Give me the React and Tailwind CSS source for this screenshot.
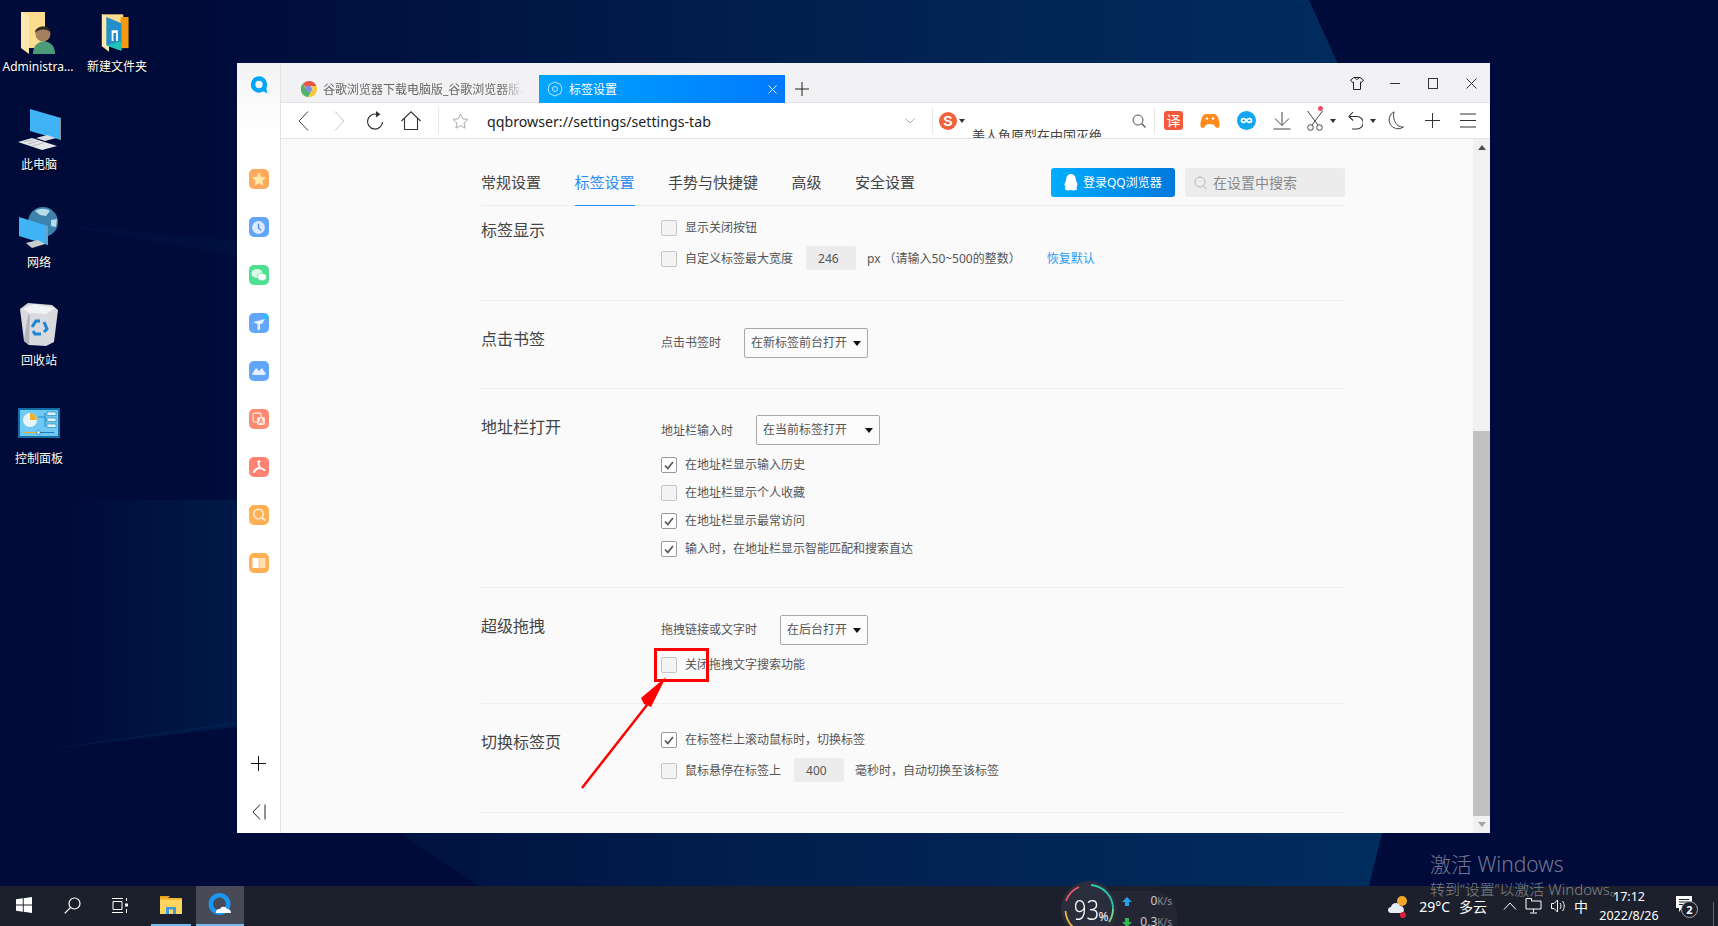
import React from 'react';

const cjk = "[font-family:'Noto_Sans','Noto_Sans_CJK_SC',sans-serif]";

function Wallpaper() {
  return (
    <svg className="absolute inset-0 w-full h-full" viewBox="0 0 1718 926">
      <defs>
        <linearGradient id="beam" x1="200" y1="0" x2="1340" y2="0" gradientUnits="userSpaceOnUse">
          <stop offset="0" stopColor="#000b3a" />
          <stop offset="0.5" stopColor="#011f4d" />
          <stop offset="1" stopColor="#012c5e" />
        </linearGradient>
        <linearGradient id="side" x1="70" y1="0" x2="237" y2="0" gradientUnits="userSpaceOnUse">
          <stop offset="0" stopColor="#000b3a" />
          <stop offset="1" stopColor="#001a47" />
        </linearGradient>
      </defs>
      <polygon points="200,0 1309,0 1490,400 1369,886 480,886 237,725 200,400" fill="url(#beam)" />
      <polygon points="60,500 237,500 237,724 40,750" fill="url(#side)" />
      <polygon points="40,750 237,722 237,727" fill="#01305f" opacity="0.35" />
      <polygon points="60,225 237,240 237,256" fill="#012a55" opacity="0.15" />
    </svg>
  );
}

function DesktopIcon({ pos, gap, label, children }) {
  return (
    <div className={`absolute flex flex-col items-center ${pos}`}>
      {children}
      <span className={`${gap} text-[12px] leading-[18px] text-white [text-shadow:0_1px_2px_#000] ${cjk}`}>{label}</span>
    </div>
  );
}

function FolderBack({ children, w = 36 }) {
  return (
    <svg width={w} height="42" viewBox="0 0 36 42">
      <path d="M1 0 H25 V36 H1 Z" fill="#fcdc8e" />
      <path d="M1 0 L9 4 V42 L1 36 Z" fill="#fbe8ad" />
      {children}
    </svg>
  );
}

function DesktopIcons() {
  return (
    <>
      <DesktopIcon pos="left-0 top-[12px] w-[76px]" gap="mt-[4px]" label="Administra...">
        <FolderBack>
          <path d="M13 42 C13 32 19 30 24 29 C29 30 35 32 35 42 Z" fill="#4b9a78" />
          <circle cx="23" cy="22" r="7.5" fill="#a4805f" />
          <path d="M15 21 C15 13 30 12 31 21 C28 17 20 16 15 21 Z" fill="#2e2a26" />
        </FolderBack>
      </DesktopIcon>
      <DesktopIcon pos="left-[79px] top-[12px] w-[76px]" gap="mt-[4px]" label="新建文件夹">
        <FolderBack w={32}>
          <path d="M22 3 H31 V38 H22 Z" fill="#f79a12" />
          <path d="M6 3 L23 10 V41 L6 35 Z" fill="#2390c9" />
          <path d="M12 18 H19 V30 H17 V21 H14 V30 H12 Z" fill="#fff" />
          <path d="M6 35 L23 41 V30 Z" fill="#22c5b5" />
        </FolderBack>
      </DesktopIcon>
      <DesktopIcon pos="left-0 top-[109px] w-[78px]" gap="mt-[6px]" label="此电脑">
        <svg width="43" height="41" viewBox="0 0 43 41">
          <path d="M12 0 L43 9 V31 L12 22 Z" fill="#3fb3f5" />
          <path d="M41.5 9 H43 V31 L41.5 30.5 Z" fill="#8b95a0" />
          <path d="M18 29 L29 26 L38 29 L27 32 Z" fill="#d9dde0" />
          <path d="M0 33 L14 29 L39 37 L24 41 Z" fill="#e4e6e8" />
          <path d="M6 33 L15 31 M10 35 L20 32 M14 37 L25 34" stroke="#b4b8bc" strokeWidth="1" />
        </svg>
      </DesktopIcon>
      <DesktopIcon pos="left-0 top-[207px] w-[78px]" gap="mt-[6px]" label="网络">
        <svg width="40" height="41" viewBox="0 0 40 41">
          <circle cx="24" cy="15" r="15" fill="#3d83ab" />
          <path d="M16 4 C21 1 27 1 31 4 L27 9 L21 8 Z M32 13 L38 12 L37 20 L32 19 Z" fill="#b8dbe8" />
          <path d="M0 10 L29 19 V38 L0 29 Z" fill="#3fb3f5" />
          <path d="M27.5 18.5 L29 19 V38 L27.5 37.5 Z" fill="#8b95a0" />
          <path d="M7 36 L19 33 L26 37 L13 41 Z" fill="#c9cdd0" />
        </svg>
      </DesktopIcon>
      <DesktopIcon pos="left-0 top-[303px] w-[78px]" gap="mt-[6px]" label="回收站">
        <svg width="38" height="43" viewBox="0 0 38 43">
          <path d="M0 6 L8 0 L32 2 L38 7 L34 39 L26 43 L9 42 L4 38 Z" fill="#d8dadd" />
          <path d="M3 6 L14 1 L24 3 L35 5 L26 11 L10 10 Z" fill="#f1f2f3" />
          <path d="M8 12 L4 38 L9 42 L10 12 Z" fill="#b3b6ba" />
          <g fill="none" stroke="#1a86d8" strokeWidth="3">
            <path d="M12 24 L16 18 H20" />
            <path d="M24 19 L27 26 L24 29" />
            <path d="M21 31 H15 L13 28" />
          </g>
        </svg>
      </DesktopIcon>
      <DesktopIcon pos="left-0 top-[408px] w-[78px]" gap="mt-[12px]" label="控制面板">
        <svg width="42" height="30" viewBox="0 0 42 30">
          <rect width="42" height="30" fill="#136ea6" />
          <rect x="2" y="2" width="38" height="26" fill="#6fc9f3" />
          <circle cx="12" cy="12" r="7" fill="#e8f4fb" />
          <path d="M12 12 V5 A7 7 0 0 1 19 12 Z" fill="#f0b02b" />
          <path d="M20 9 H27 M27 5 V19 M27 12 H29" stroke="#1b7cb4" strokeWidth="0.8" />
          <rect x="29" y="4" width="9" height="3.5" fill="#dff2fb" stroke="#1b7cb4" strokeWidth="0.6" />
          <rect x="29" y="10" width="9" height="3.5" fill="#dff2fb" stroke="#1b7cb4" strokeWidth="0.6" />
          <rect x="29" y="16" width="9" height="3.5" fill="#dff2fb" stroke="#1b7cb4" strokeWidth="0.6" />
          <path d="M6 24.500 H36" stroke="#1b7cb4" strokeWidth="1" />
          <path d="M6 24.500 H19" stroke="#f0b02b" strokeWidth="1" />
          <rect x="19" y="23" width="3" height="3" fill="#fff" stroke="#1b7cb4" strokeWidth="0.6" />
        </svg>
      </DesktopIcon>
    </>
  );
}

function QLogo({ size = 18 }) {
  return (
    <svg width={size} height={size} viewBox="0 0 16 16">
      <circle cx="8" cy="7.500" r="5.300" fill="none" stroke="#00a5f8" strokeWidth="4" />
      <path d="M9 12 L15.500 15.500 L14 9 Z" fill="#00a5f8" />
    </svg>
  );
}

function RailTile({ bg, children }) {
  return <div className={`w-[20px] h-[20px] rounded-[5px] flex items-center justify-center overflow-hidden ${bg}`}>{children}</div>;
}

function Rail() {
  return (
    <div className="w-[44px] shrink-0 h-full flex flex-col items-center border-r border-[#e2e2e2] bg-gradient-to-b from-[#f3f3f5] to-white to-[9%]">
      <div className="mt-[13px] mb-[75px] h-[18px]">
        <QLogo />
      </div>
      <div className="flex flex-col gap-[28px]">
        <RailTile bg="bg-[#ffa95c]">
          <svg width="16" height="16" viewBox="0 0 14 14"><path d="M7 1 L8.800 5 L13 5.500 L10 8.500 L10.800 13 L7 10.800 L3.200 13 L4 8.500 L1 5.500 L5.200 5 Z" fill="#ffe9a8" /></svg>
        </RailTile>
        <RailTile bg="bg-[#62a6fb]">
          <svg width="15" height="15" viewBox="0 0 14 14"><circle cx="7" cy="7" r="6" fill="#dceaff" /><path d="M7 3.500 V7.500 L9.500 9.500" fill="none" stroke="#4a8ff0" strokeWidth="1.300" /></svg>
        </RailTile>
        <RailTile bg="bg-[#4fdf90]">
          <svg width="16" height="14" viewBox="0 0 16 14"><ellipse cx="6" cy="5.500" rx="5.500" ry="4.500" fill="#d8fbe6" /><ellipse cx="11" cy="9" rx="4.500" ry="3.800" fill="#fff" stroke="#4fdf90" strokeWidth="0.7" /></svg>
        </RailTile>
        <RailTile bg="bg-[#62a6fb] relative">
          <svg width="16" height="16" viewBox="0 0 16 16"><path d="M2 7 L14 4 L11 9 H9 V15 H6.500 V9 Z" fill="#e4efff" /></svg>
          <span className="absolute right-[1px] top-[1px] w-[5px] h-[5px] rounded-full bg-[#19c3ff]" />
        </RailTile>
        <RailTile bg="bg-[#62a6fb]">
          <svg width="16" height="12" viewBox="0 0 16 12"><path d="M1 9 L5 3 L8 6 L11 3 L15 9 L13 10 H3 Z" fill="#e4efff" /></svg>
        </RailTile>
        <RailTile bg="bg-[#ff8a70]">
          <svg width="16" height="16" viewBox="0 0 16 16"><rect x="2" y="2" width="8" height="9" rx="2" fill="none" stroke="#ffdcd3" strokeWidth="1.300" /><rect x="6" y="6" width="8" height="8" rx="2" fill="#ffe9e3" /><path d="M8 12.500 L10 7.500 L12 12.500 M8.800 11 H11.200" fill="none" stroke="#ff7a5e" strokeWidth="0.900" /></svg>
        </RailTile>
        <RailTile bg="bg-[#ff8272]">
          <svg width="14" height="14" viewBox="0 0 14 14"><path d="M7 1.500 C5.500 3 7 6 8 8 C9.500 8.500 11.500 8.800 12.500 10 M8 8 C6 8 3.500 9.500 2 12 M6.500 1.500 H7.500" fill="none" stroke="#fff" strokeWidth="1.900" strokeLinecap="round" /></svg>
        </RailTile>
        <RailTile bg="bg-[#ffb054]">
          <svg width="16" height="16" viewBox="0 0 16 16"><circle cx="7.500" cy="7" r="4.700" fill="none" stroke="#ffedd2" strokeWidth="1.600" /><path d="M11 10.500 L14 13.500" stroke="#ffedd2" strokeWidth="1.800" /></svg>
        </RailTile>
        <RailTile bg="bg-[#ffb054]">
          <svg width="14" height="12" viewBox="0 0 14 12"><path d="M0.500 1 H6.700 V11 H0.500 Z" fill="#fff" /><path d="M7.300 1 H13.500 V11 H7.300 Z" fill="#ffe0b5" /></svg>
        </RailTile>
      </div>
      <div className="mt-auto mb-[13px] flex flex-col items-center gap-[33px]">
        <svg width="15" height="15" viewBox="0 0 15 15"><path d="M7.500 0 V15 M0 7.500 H15" stroke="#111" strokeWidth="1" /></svg>
        <svg width="14" height="16" viewBox="0 0 14 16"><path d="M8 0.500 L1 8 L8 15.500 M13 0.500 V15.500" fill="none" stroke="#222" strokeWidth="1" /></svg>
      </div>
    </div>
  );
}

function WinButton({ children }) {
  return <div className="w-[38px] h-[40px] flex items-center justify-center">{children}</div>;
}

function TabStrip() {
  return (
    <div className={`h-[40px] shrink-0 flex bg-[#f2f2f5] border-b border-[#e4e4e7] ${cjk}`}>
      <div className="flex items-center h-full pt-[13px] pl-[20px]">
        <svg width="16" height="16" viewBox="0 0 16 16">
          <path d="M8 0 A8 8 0 0 1 15.400 5 H8 A3 3 0 0 0 5.200 7 L2 2.500 A8 8 0 0 1 8 0 Z" fill="#e7564b" />
          <path d="M15.400 5 A8 8 0 0 1 7 16 L10.500 9.700 A3 3 0 0 0 10.300 5 Z" fill="#f6c73c" />
          <path d="M2 2.500 L6 9.500 A3 3 0 0 0 10.500 9.700 L7 16 A8 8 0 0 1 2 2.500 Z" fill="#4fb267" />
          <circle cx="8" cy="8" r="3" fill="#7a8ee8" />
        </svg>
        <span className="ml-[6px] pt-[2px] w-[201px] overflow-hidden whitespace-nowrap text-[12px] text-[#666] [mask-image:linear-gradient(90deg,#000_88%,transparent)]">谷歌浏览器下载电脑版_谷歌浏览器版本</span>
      </div>
      <div className="ml-[15px] mt-[12px] w-[246px] h-[28px] flex items-center pl-[8px] pr-[8px] bg-gradient-to-r from-[#00a6ff] to-[#0079ff] text-white">
        <svg width="16" height="16" viewBox="0 0 16 16"><path d="M8 1 L13.500 3.500 L15 8 L13.500 12.500 L8 15 L2.500 12.500 L1 8 L2.500 3.500 Z" fill="none" stroke="#bfe6ff" strokeWidth="1" /><circle cx="8" cy="8" r="2.500" fill="none" stroke="#bfe6ff" strokeWidth="1" /></svg>
        <span className="ml-[6px] pt-[2px] text-[12px]">标签设置</span>
        <svg className="ml-auto" width="9" height="9" viewBox="0 0 9 9"><path d="M0.500 0.500 L8.500 8.500 M8.500 0.500 L0.500 8.500" stroke="#fff" strokeWidth="1" /></svg>
      </div>
      <div className="ml-[10px] mt-[19px]">
        <svg width="14" height="14" viewBox="0 0 14 14"><path d="M7 0 V14 M0 7 H14" stroke="#222" strokeWidth="1" /></svg>
      </div>
      <div className="ml-auto flex">
        <WinButton>
          <svg width="14" height="13" viewBox="0 0 14 13"><path d="M4 0.500 H10 L13.500 3 L11.500 5.500 L10.500 5 V12.500 H3.500 V5 L2.500 5.500 L0.500 3 Z M5 0.500 C5.500 3 8.500 3 9 0.500" fill="none" stroke="#222" strokeWidth="1" /></svg>
        </WinButton>
        <WinButton><div className="w-[10px] h-px bg-[#333]" /></WinButton>
        <WinButton><div className="w-[10px] h-[11px] border border-[#333]" /></WinButton>
        <WinButton>
          <svg width="11" height="11" viewBox="0 0 11 11"><path d="M0.500 0.500 L10.500 10.500 M10.500 0.500 L0.500 10.500" stroke="#333" strokeWidth="1" /></svg>
        </WinButton>
      </div>
    </div>
  );
}

function ToolBtn({ w = 'w-[36px]', children }) {
  return <div className={`${w} h-full shrink-0 flex items-center justify-center`}>{children}</div>;
}

function Caret() {
  return <svg className="shrink-0" width="6" height="4" viewBox="0 0 6 4"><path d="M0 0 H6 L3 4 Z" fill="#333" /></svg>;
}

function ToolBar() {
  return (
    <div className={`h-[36px] shrink-0 flex items-center pl-[4px] bg-white border-b border-[#e4e4e7] ${cjk}`}>
      <ToolBtn>
        <svg width="11" height="20" viewBox="0 0 11 20"><path d="M10 0.500 L1 10 L10 19.500" fill="none" stroke="#444" strokeWidth="1" /></svg>
      </ToolBtn>
      <ToolBtn>
        <svg width="11" height="20" viewBox="0 0 11 20"><path d="M1 0.500 L10 10 L1 19.500" fill="none" stroke="#c4c4c4" strokeWidth="1" /></svg>
      </ToolBtn>
      <ToolBtn>
        <svg width="18" height="20" viewBox="0 0 18 20"><path d="M11 3.300 A7.500 7.500 0 1 0 16.500 11" fill="none" stroke="#333" strokeWidth="1.200" /><path d="M10 0 L14.500 3.300 L10 6.500 Z" fill="#333" /></svg>
      </ToolBtn>
      <ToolBtn>
        <svg width="20" height="19" viewBox="0 0 20 19"><path d="M0.500 10 L10 0.800 L19.500 10 M3.500 7.500 V18.500 H16.500 V7.500" fill="none" stroke="#333" strokeWidth="1.100" /></svg>
      </ToolBtn>
      <div className="ml-[9px] w-px h-[26px] bg-[#e8e8e8]" />
      <div className="ml-[6px] w-[30px] flex justify-center">
        <svg width="17" height="16" viewBox="0 0 17 16"><path d="M8.500 1 L10.700 5.800 L16 6.400 L12 10 L13.100 15.200 L8.500 12.600 L3.900 15.200 L5 10 L1 6.400 L6.300 5.800 Z" fill="none" stroke="#aaa" strokeWidth="1" /></svg>
      </div>
      <span className="ml-[12px] pt-[2px] w-[413px] text-[14.200px] text-[#222] whitespace-nowrap">qqbrowser://settings/settings-tab</span>
      <div className="w-[20px] flex justify-center">
        <svg width="10" height="6" viewBox="0 0 10 6"><path d="M0.500 0.500 L5 5 L9.500 0.500" fill="none" stroke="#aaa" strokeWidth="1" /></svg>
      </div>
      <div className="ml-[12px] w-px h-[26px] bg-[#e8e8e8]" />
      <div className="ml-[6px] w-[18px] h-[18px] rounded-full bg-[#f2613c] flex items-center justify-center text-[14px] leading-none font-bold text-white [font-family:'Liberation_Sans',sans-serif]">S</div>
      <div className="ml-[1px] w-[7px] flex justify-center"><Caret /></div>
      <div className="ml-[7px] w-[130px] h-full overflow-hidden pt-[24px] text-[13px] leading-[16px] text-[#444] whitespace-nowrap">美人鱼原型在中国灭绝</div>
      <div className="ml-[27px] w-[20px] flex justify-center">
        <svg width="14" height="14" viewBox="0 0 14 14"><circle cx="6" cy="6" r="5" fill="none" stroke="#555" strokeWidth="1" /><path d="M9.500 9.500 L13.500 13.500" stroke="#555" strokeWidth="1.200" /></svg>
      </div>
      <div className="ml-[5px] w-px h-[26px] bg-[#e8e8e8]" />
      <div className="ml-[9px] w-[19px] h-[19px] rounded-[3px] bg-[#f4593c] flex items-center justify-center text-[14px] leading-none text-white">译</div>
      <div className="ml-[9px] flex h-full">
        <ToolBtn>
          <svg width="20" height="16" viewBox="0 0 20 16"><path d="M6 1 H14 C18 1 20 9 19.500 13 C19 16 16 15.500 14 12 C13 10.500 7 10.500 6 12 C4 15.500 1 16 0.500 13 C0 9 2 1 6 1 Z" fill="#ff8a1e" /><circle cx="7" cy="5.500" r="1.200" fill="#fff" /><circle cx="13" cy="5.500" r="1.200" fill="#fff" /></svg>
        </ToolBtn>
        <ToolBtn>
          <svg width="19" height="19" viewBox="0 0 19 19"><circle cx="9.500" cy="9.500" r="9.500" fill="#14a6f0" /><path d="M9.500 9.500 C8 7 4.500 7 4.500 9.500 C4.500 12 8 12 9.500 9.500 C11 7 14.500 7 14.500 9.500 C14.500 12 11 12 9.500 9.500 Z" fill="none" stroke="#fff" strokeWidth="1.600" /></svg>
        </ToolBtn>
        <ToolBtn>
          <svg width="18" height="18" viewBox="0 0 18 18"><path d="M9 0 V13 M2 6.500 L9 13.500 L16 6.500 M0.500 17 H17.500" fill="none" stroke="#444" strokeWidth="1" /></svg>
        </ToolBtn>
        <ToolBtn w="w-[30px] relative">
          <svg width="18" height="21" viewBox="0 0 18 21"><path d="M1.500 1 L12 15 M16.500 1 L6 15" stroke="#444" strokeWidth="1" /><circle cx="4.500" cy="17.500" r="2.800" fill="none" stroke="#444" strokeWidth="1" /><circle cx="13.500" cy="17.500" r="2.800" fill="none" stroke="#444" strokeWidth="1" /></svg>
          <span className="absolute right-[7px] top-[3px] w-[5px] h-[5px] rounded-full bg-[#ee4d5f]" />
        </ToolBtn>
        <div className="w-[6px] h-full flex items-center"><Caret /></div>
        <div className="w-[4px]" />
        <ToolBtn w="w-[30px]">
          <svg width="15" height="19" viewBox="0 0 15 19"><path d="M1 5.500 H9 A6 6 0 0 1 9 18 H4" fill="none" stroke="#333" strokeWidth="1.100" /><path d="M5 1 L1 5.500 L5 9.500" fill="none" stroke="#333" strokeWidth="1.100" /></svg>
        </ToolBtn>
        <div className="w-[6px] h-full flex items-center"><Caret /></div>
        <div className="w-[2px]" />
        <ToolBtn>
          <svg width="16" height="19" viewBox="0 0 16 19"><path d="M6 0.800 A9 9 0 1 0 15.500 16 C9 17 4 9 6 0.800 Z" fill="none" stroke="#444" strokeWidth="1" /></svg>
        </ToolBtn>
        <ToolBtn>
          <svg width="15" height="15" viewBox="0 0 15 15"><path d="M7.500 0 V15 M0 7.500 H15" stroke="#333" strokeWidth="1" /></svg>
        </ToolBtn>
        <ToolBtn>
          <svg width="16" height="15" viewBox="0 0 16 15"><path d="M0 1 H16 M0 7.500 H16 M0 14 H16" stroke="#333" strokeWidth="1" /></svg>
        </ToolBtn>
      </div>
    </div>
  );
}

function Check({ on }) {
  return (
    <div className={`w-[16px] h-[16px] shrink-0 rounded-[2px] border flex items-center justify-center ${on ? 'bg-white border-[#999]' : 'bg-[#f4f4f4] border-[#c4c4c4]'}`}>
      {on && <svg width="10" height="9" viewBox="0 0 10 9"><path d="M1 4.500 L3.800 7.500 L9 1" fill="none" stroke="#555" strokeWidth="1.700" /></svg>}
    </div>
  );
}

function Option({ on, children }) {
  return (
    <div className="flex items-center h-[16px] gap-[8px] text-[12px] text-[#555]">
      <Check on={on} />
      <span className="whitespace-nowrap">{children}</span>
    </div>
  );
}

function Dropdown({ w, text }) {
  return (
    <div className={`${w} h-[30px] flex items-center justify-between pl-[6px] pr-[6px] rounded-[2px] border border-[#a8a8a8] bg-[#fbfbfb] text-[12px] text-[#555]`}>
      <span className="whitespace-nowrap">{text}</span>
      <svg width="8" height="5" viewBox="0 0 8 5"><path d="M0 0 H8 L4 5 Z" fill="#111" /></svg>
    </div>
  );
}

function NumBox({ value }) {
  return <input readOnly value={value} className="block mb-[2px] w-[50px] h-[24px] pl-[12px] rounded-[3px] bg-[#ececec] text-[12px] text-[#555] outline-none" />;
}

function Section({ h, top, labelOffset, title, children }) {
  return (
    <div className={`${h} ${top} flex border-b border-[#eeeeee]`}>
      <div className={`w-[180px] shrink-0 text-[16px] leading-[24px] text-[#444] ${labelOffset}`}>{title}</div>
      <div className="flex flex-col items-start">{children}</div>
    </div>
  );
}

function SettingsTabs() {
  const names = ['常规设置', '标签设置', '手势与快捷键', '高级', '安全设置'];
  return (
    <div className="h-[67px] flex items-stretch gap-[33.500px] border-b border-[#eeeeee]">
      {names.map((n) => (
        <div key={n} className={`pt-[32px] -mb-px text-[15px] leading-[22px] border-b ${n === '标签设置' ? 'text-[#2a8cf0] border-[#2a8cf0]' : 'text-[#444] border-transparent'}`}>{n}</div>
      ))}
      <div className="ml-auto mt-[29px] w-[124px] h-[29px] flex items-center pl-[13px] gap-[5px] rounded-[3px] bg-gradient-to-r from-[#00aeff] to-[#0078dc] text-[12px] text-white">
        <svg width="14" height="17" viewBox="0 0 14 17"><path d="M7 0 C11 0 12 4 12 6.500 C13.500 9 14 12 12.500 12.500 C12.500 14 14 15 12 16 C10 17 8.500 16 7 16 C5.500 16 4 17 2 16 C0 15 1.500 14 1.500 12.500 C0 12 0.500 9 2 6.500 C2 4 3 0 7 0 Z" fill="#fff" /></svg>
        <span className="whitespace-nowrap">登录QQ浏览器</span>
      </div>
      <div className="-ml-[23.500px] mt-[29px] w-[160px] h-[29px] flex items-center pl-[9px] gap-[6px] rounded-[3px] bg-[#ececec] text-[14px] text-[#888]">
        <svg width="13" height="14" viewBox="0 0 13 14"><circle cx="6" cy="6" r="5" fill="none" stroke="#b8b8b8" strokeWidth="1" /><path d="M9.500 10 L12.500 13.500" stroke="#b8b8b8" strokeWidth="1" /></svg>
        <span className="whitespace-nowrap">在设置中搜索</span>
      </div>
    </div>
  );
}

function SettingsPage() {
  return (
    <div className="flex-1 pl-[200px] pr-[128px] bg-[#fafafa]">
      <SettingsTabs />
      <Section h="h-[95px]" top="pt-[14px]" labelOffset="-mt-[2px]" title="标签显示">
        <Option>显示关闭按钮</Option>
        <div className="mt-[11px] flex items-center h-[24px] text-[12px] text-[#555]">
          <Check />
          <span className="ml-[8px]">自定义标签最大宽度</span>
          <div className="ml-[13px]"><NumBox value="246" /></div>
          <span className="ml-[11px]">px</span>
          <span className="ml-[3px] whitespace-nowrap">（请输入50~500的整数）</span>
          <span className="ml-[26px] text-[#2a9bf5]">恢复默认</span>
        </div>
      </Section>
      <Section h="h-[88px]" top="pt-[27px]" labelOffset="-mt-px" title="点击书签">
        <div className="flex items-center gap-[23px] text-[12px] text-[#555]">
          <span>点击书签时</span>
          <Dropdown w="w-[124px]" text="在新标签前台打开" />
        </div>
      </Section>
      <Section h="h-[199px]" top="pt-[26px]" labelOffset="mt-0" title="地址栏打开">
        <div className="flex items-center gap-[23px] text-[12px] text-[#555]">
          <span className="pt-[2px]">地址栏输入时</span>
          <Dropdown w="w-[124px]" text="在当前标签打开" />
        </div>
        <div className="mt-[12px] flex flex-col gap-[12px]">
          <Option on>在地址栏显示输入历史</Option>
          <Option>在地址栏显示个人收藏</Option>
          <Option on>在地址栏显示最常访问</Option>
          <Option on>输入时，在地址栏显示智能匹配和搜索直达</Option>
        </div>
      </Section>
      <Section h="h-[116px]" top="pt-[27px]" labelOffset="-mt-px" title="超级拖拽">
        <div className="flex items-center gap-[23px] text-[12px] text-[#555]">
          <span>拖拽链接或文字时</span>
          <Dropdown w="w-[88px]" text="在后台打开" />
        </div>
        <div className="mt-[12px]">
          <Option>关闭拖拽文字搜索功能</Option>
        </div>
      </Section>
      <Section h="h-[109px]" top="pt-[28px]" labelOffset="-mt-[2px]" title="切换标签页">
        <Option on>在标签栏上滚动鼠标时，切换标签</Option>
        <div className="mt-[11px] flex items-center h-[24px] text-[12px] text-[#555]">
          <Check />
          <span className="ml-[8px]">鼠标悬停在标签上</span>
          <div className="ml-[13px]"><NumBox value="400" /></div>
          <span className="ml-[11px] whitespace-nowrap">毫秒时，自动切换至该标签</span>
        </div>
      </Section>
    </div>
  );
}

function Scrollbar() {
  return (
    <div className="w-[17px] shrink-0 flex flex-col bg-[#f1f1f1]">
      <div className="h-[17px] flex items-center justify-center">
        <svg width="8" height="5" viewBox="0 0 8 5"><path d="M4 0 L8 5 H0 Z" fill="#505050" /></svg>
      </div>
      <div className="flex-1">
        <div className="mt-[275px] h-[385px] bg-[#c1c1c1]" />
      </div>
      <div className="h-[17px] flex items-center justify-center">
        <svg width="8" height="5" viewBox="0 0 8 5"><path d="M4 5 L8 0 H0 Z" fill="#a3a3a3" /></svg>
      </div>
    </div>
  );
}

function BrowserWindow() {
  return (
    <div className={`absolute left-[237px] top-[63px] w-[1253px] h-[770px] flex bg-white ${cjk}`}>
      <Rail />
      <div className="flex-1 min-w-0 flex flex-col">
        <TabStrip />
        <ToolBar />
        <div className="flex-1 min-h-0 flex">
          <SettingsPage />
          <Scrollbar />
        </div>
      </div>
    </div>
  );
}

function Annotation() {
  return (
    <>
      <div className="absolute left-[654px] top-[648px] w-[55px] h-[34px] border-[3px] border-[#ff0000]" />
      <svg className="absolute left-[575px] top-[670px]" width="100" height="125" viewBox="0 0 100 125">
        <path d="M7 118 L72 35" stroke="#ff0000" strokeWidth="2.500" />
        <path d="M91 7 L66 28 L69 34 L76 37 Z" fill="#ff0000" />
      </svg>
    </>
  );
}

function TaskSlot({ w, active, line, children }) {
  return (
    <div className={`${w} h-full shrink-0 flex items-center justify-center border-b-[2px] ${line ? 'border-[#76b9ed]' : 'border-transparent'} ${active ? 'bg-[#484b57]' : ''}`}>
      {children}
    </div>
  );
}

function Taskbar() {
  return (
    <div className={`absolute left-0 right-0 top-[886px] h-[40px] flex items-center bg-[#1c202c] text-white ${cjk}`}>
      <TaskSlot w="w-[48px]">
        <svg width="16" height="16" viewBox="0 0 16 16"><path d="M0 2.300 L6.800 1.300 V7.500 H0 Z M7.700 1.200 L16 0 V7.500 H7.700 Z M0 8.500 H6.800 V14.700 L0 13.700 Z M7.700 8.500 H16 V16 L7.700 14.800 Z" fill="#fff" /></svg>
      </TaskSlot>
      <TaskSlot w="w-[48px]">
        <svg width="17" height="17" viewBox="0 0 17 17"><circle cx="10.500" cy="6.500" r="5.500" fill="none" stroke="#fff" strokeWidth="1.200" /><path d="M6.500 10.500 L0.700 16.300" stroke="#fff" strokeWidth="1.200" /></svg>
      </TaskSlot>
      <TaskSlot w="w-[48px]">
        <svg width="16" height="15" viewBox="0 0 16 15"><path d="M0 0.500 H11 M0 14.500 H11 M1 3.500 H10 V11.500 H1 Z M14.500 0 V3 M14.500 11 V15" fill="none" stroke="#fff" strokeWidth="1" /><rect x="13" y="5.500" width="3" height="3" fill="#fff" /></svg>
      </TaskSlot>
      <div className="w-[7px]" />
      <TaskSlot w="w-[40px]" line>
        <svg width="22" height="18" viewBox="0 0 22 18"><path d="M0 2 H8 L10 0 H0 Z" fill="#e8a21c" /><rect y="2" width="22" height="16" fill="#fdd55f" /><rect y="2" width="22" height="2" fill="#f3b92f" /><path d="M6 18 V11 H16 V18 H13 V13.500 H9 V18 Z" fill="#3f9ae0" /></svg>
      </TaskSlot>
      <div className="w-[5px]" />
      <TaskSlot w="w-[48px]" active line>
        <svg width="24" height="24" viewBox="0 0 24 24">
          <circle cx="11.500" cy="11" r="8.700" fill="none" stroke="#1a97f2" strokeWidth="4.500" />
          <path d="M8 19 C8 16 11 16 12 16 C13 13 18 13 19 16 C22 16 23 18 23 20 H8 Z" fill="#fff" />
        </svg>
      </TaskSlot>
      <div className="ml-auto h-full flex items-center text-[14px]">
        <svg width="24" height="24" viewBox="0 0 24 24">
          <circle cx="16" cy="7" r="5" fill="#f2a62c" />
          <path d="M5 19 C1 19 1 13 5 13 C6 8 13 8 14 12 C18 11 20 19 15 19 Z" fill="#e6edf6" />
          <circle cx="17" cy="21" r="3" fill="#e0203c" />
        </svg>
        <span className="ml-[9px] whitespace-nowrap">29°C</span>
        <span className="ml-[9px]">多云</span>
        <svg className="ml-[16px]" width="14" height="8" viewBox="0 0 14 8"><path d="M1 7.500 L7 1 L13 7.500" fill="none" stroke="#fff" strokeWidth="1" /></svg>
        <svg className="ml-[8px]" width="17" height="16" viewBox="0 0 17 16"><path d="M1 0.500 H6.500 V3 H16 V11 H1 Z M8.500 11 V14.500 M5 15 H12" fill="none" stroke="#fff" strokeWidth="1" /></svg>
        <svg className="ml-[9px]" width="15" height="14" viewBox="0 0 15 14"><path d="M0.500 4.500 H3 L6.500 1 V13 L3 9.500 H0.500 Z M9 4 C10.300 6 10.300 8 9 10 M11.500 2 C13.800 5 13.800 9 11.500 12" fill="none" stroke="#fff" strokeWidth="1" /></svg>
        <span className="ml-[8px]">中</span>
        <div className="ml-[8px] w-[66px] flex flex-col items-center text-[12.500px] leading-[19px]">
          <span>17:12</span>
          <span className="whitespace-nowrap">2022/8/26</span>
        </div>
        <div className="relative ml-[14px] w-[18px] h-[18px] -mt-[3px]">
          <svg width="16" height="17" viewBox="0 0 16 17"><path d="M0 0 H16 V12 H6 L3 16 V12 H0 Z" fill="#fff" /><path d="M3 3.500 H13 M3 6 H13 M3 8.500 H13" stroke="#1c202c" strokeWidth="1" /></svg>
          <span className="absolute left-[5px] top-[5px] w-[17px] h-[17px] rounded-full bg-[#1c202c] border border-[#aaa] flex items-center justify-center text-[11px] font-bold leading-none">2</span>
        </div>
        <div className="ml-[19px] mr-[4px] w-px h-[24px] mt-[16px] bg-[#666]" />
      </div>
    </div>
  );
}

function NetWidget() {
  return (
    <div className={`absolute left-[1061px] top-[881px] flex text-white ${cjk}`}>
      <div className="relative z-10 w-[56px] h-[56px] pl-[4px] rounded-full bg-[#2a2e3c] flex items-center justify-center">
        <svg className="absolute inset-0" width="56" height="56" viewBox="0 0 56 56">
          <g fill="none" strokeWidth="1.800">
            <path d="M30 4 A24 24 0 0 1 52 28" stroke="#2bc9ad" />
            <path d="M52 28 A24 24 0 0 1 48 41" stroke="#7bdc8c" />
            <path d="M18 6 A24 24 0 0 0 5 20" stroke="#f0566e" />
            <path d="M4.500 30 A24 24 0 0 0 12 46" stroke="#f2b33d" />
          </g>
        </svg>
        <span className="inline-block -mx-[3px] scale-x-[0.82] text-[27px] leading-none font-light">93</span>
        <span className="self-end mb-[14px] text-[12px] leading-none">%</span>
      </div>
      <div className="-ml-[6px] mt-[10px] w-[66px] h-[46px] pl-[11px] pr-[5px] rounded-tr-[23px] bg-[#242733] text-[#c9ccd2]">
        <div className="flex items-center h-[20px]">
          <svg width="10" height="9" viewBox="0 0 10 9"><path d="M5 0 L10 5 H7 V9 H3 V5 H0 Z" fill="#27a0ea" /></svg>
          <span className="ml-auto text-[12px] leading-none">0<span className="text-[10px] text-[#8b8e96]">K/s</span></span>
        </div>
        <div className="flex items-center h-[20px] mt-px whitespace-nowrap">
          <svg width="10" height="9" viewBox="0 0 10 9"><path d="M5 9 L10 4 H7 V0 H3 V4 H0 Z" fill="#2fb94e" /></svg>
          <span className="ml-auto text-[12px] leading-none">0.3<span className="text-[10px] text-[#8b8e96]">K/s</span></span>
        </div>
      </div>
    </div>
  );
}

function Activation() {
  return (
    <div className={`absolute left-[1430px] top-[850px] pointer-events-none whitespace-nowrap text-white/45 ${cjk}`}>
      <div className="text-[21px] leading-[28px] font-light">激活 Windows</div>
      <div className="mt-[2px] text-[15px] leading-[18px] font-light">转到“设置”以激活 Windows。</div>
    </div>
  );
}

export default function App() {
  return (
    <div className="relative w-[1718px] h-[926px] overflow-hidden bg-[#000b3a]">
      <Wallpaper />
      <DesktopIcons />
      <BrowserWindow />
      <Annotation />
      <Taskbar />
      <NetWidget />
      <Activation />
    </div>
  );
}
